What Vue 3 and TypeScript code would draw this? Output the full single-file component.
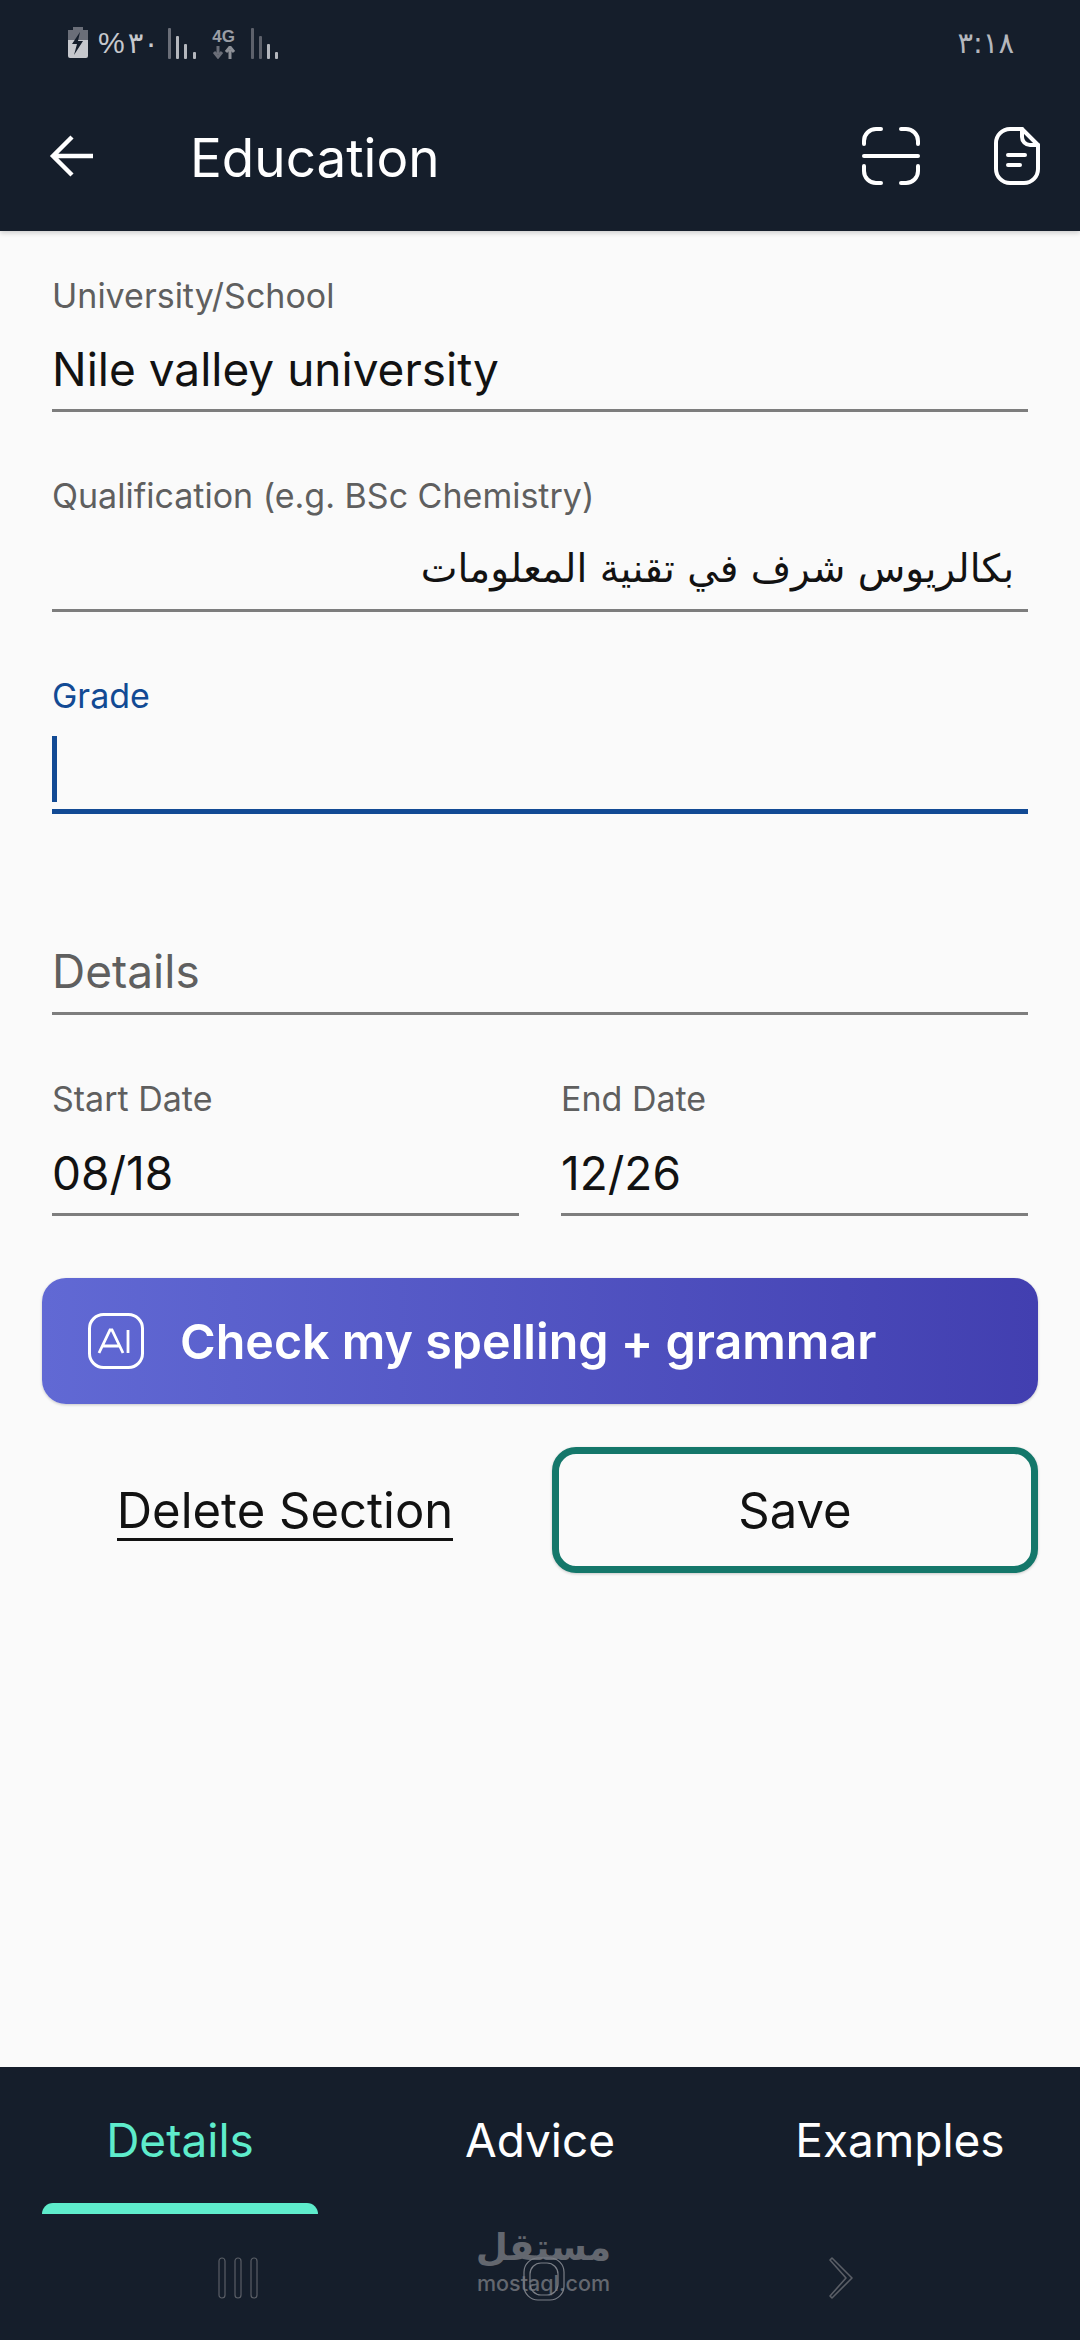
<script setup lang="ts">
interface Field { label: string; value: string; rtl?: boolean }
const topFields: Field[] = [
  { label: 'University/School', value: 'Nile valley university' },
  { label: 'Qualification (e.g. BSc Chemistry)', value: 'بكالريوس شرف في تقنية المعلومات', rtl: true },
]
const dates: Field[] = [
  { label: 'Start Date', value: '08/18' },
  { label: 'End Date', value: '12/26' },
]
const tabs = ['Details', 'Advice', 'Examples']
</script>

<template>
  <div class="screen">
    <header class="header">
      <div class="status">
        <div class="status-left">
          <svg class="battery" width="22" height="32" viewBox="0 0 22 32">
            <path d="M6 0h10v3h5v10H1V3h5z" fill="#6a6e78" />
            <path d="M1 13h20v16a2 2 0 0 1-2 2H3a2 2 0 0 1-2-2z" fill="#c6c8cd" />
            <path d="M13 5 5 17h5l-3 11 9-14h-5z" fill="#151e2b" />
          </svg>
          <span class="status-text pct">%</span>
          <span class="status-text num">۳۰</span>
          <svg class="sig1" width="28" height="31" viewBox="0 0 28 31">
            <rect x="0" y="0" width="3" height="31" rx="1" fill="#6a6e78" />
            <rect x="8" y="8" width="3" height="23" rx="1" fill="#b4b7bd" />
            <rect x="16" y="16" width="3" height="15" rx="1" fill="#b4b7bd" />
            <rect x="25" y="24" width="3" height="7" rx="1" fill="#b4b7bd" />
          </svg>
          <div class="net">
            <span class="net-label">4G</span>
            <svg width="24" height="13" viewBox="0 0 24 13">
              <path d="M6 0v8M2 6l4 5 4-5" stroke="#6a6e78" stroke-width="3" fill="none" />
              <path d="M18 13V4M14 6l4-5 4 5" stroke="#8d9097" stroke-width="3" fill="none" />
            </svg>
          </div>
          <svg class="sig2" width="27" height="31" viewBox="0 0 27 31">
            <rect x="0" y="0" width="3" height="31" rx="1" fill="#5d616b" />
            <rect x="8" y="8" width="3" height="23" rx="1" fill="#5d616b" />
            <rect x="16" y="16" width="3" height="15" rx="1" fill="#b4b7bd" />
            <rect x="24" y="24" width="3" height="7" rx="1" fill="#b4b7bd" />
          </svg>
        </div>
        <span class="time">۳:۱۸</span>
      </div>
      <div class="toolbar">
        <svg class="back" width="44" height="44" viewBox="0 0 44 44">
          <path d="M44 22H4M23 3 4 22l19 19" fill="none" stroke="#fff" stroke-width="4.4" />
        </svg>
        <h1 class="title">Education</h1>
        <svg class="scan" width="58" height="58" viewBox="0 0 58 58" fill="none" stroke="#fff" stroke-width="4" stroke-linecap="round">
          <path d="M19 2h-5A12 12 0 0 0 2 14v3" />
          <path d="M39 2h5a12 12 0 0 1 12 12v3" />
          <path d="M2 29h54" />
          <path d="M2 39v5a12 12 0 0 0 12 12h5" />
          <path d="M56 39v5a12 12 0 0 1-12 12h-5" />
        </svg>
        <svg class="doc" width="46" height="58" viewBox="0 0 46 58" fill="none" stroke="#fff" stroke-width="4" stroke-linecap="round" stroke-linejoin="round">
          <path d="M28 2H16A14 14 0 0 0 2 16v26a14 14 0 0 0 14 14h14a14 14 0 0 0 14-14V18z" />
          <path d="M28 2v8a8 8 0 0 0 8 8h8" />
          <path d="M14 28h17M14 38h12" />
        </svg>
      </div>
    </header>

    <main class="main">
      <div class="fields">
        <div v-for="f in topFields" :key="f.label" class="field">
          <label class="label">{{ f.label }}</label>
          <div class="value" :class="{ rtl: f.rtl }">{{ f.value }}</div>
        </div>
        <div class="field focused">
          <label class="label">Grade</label>
          <div class="value"><span class="caret"></span></div>
        </div>
        <div class="field plain">
          <div class="value placeholder">Details</div>
        </div>
        <div class="date-row">
          <div v-for="d in dates" :key="d.label" class="field">
            <label class="label">{{ d.label }}</label>
            <div class="value">{{ d.value }}</div>
          </div>
        </div>
      </div>

      <button class="ai-btn" type="button">
        <svg class="ai-icon" width="56" height="56" viewBox="0 0 56 56" fill="none">
          <rect x="1.5" y="1.5" width="53" height="53" rx="14" stroke="#fff" stroke-width="3" />
          <path d="M11 40 22 17h2l11 23M15 33h16M40 17v23" stroke="#fff" stroke-width="2.8" />
        </svg>
        <span>Check my spelling + grammar</span>
      </button>

      <div class="actions">
        <div class="delete-wrap"><span class="delete">Delete Section</span></div>
        <button class="save" type="button">Save</button>
      </div>
    </main>

    <footer class="footer">
      <nav class="tabs">
        <div v-for="(t, i) in tabs" :key="t" class="tab" :class="{ active: i === 0 }">
          <span class="tab-text">{{ t }}</span>
          <span class="indicator"></span>
        </div>
      </nav>
      <div class="sysnav">
        <svg width="40" height="42" viewBox="0 0 40 42" fill="none" stroke="#5a5e66" stroke-width="1.2">
          <rect x="1" y="1" width="6" height="40" rx="3" />
          <rect x="17" y="1" width="6" height="40" rx="3" />
          <rect x="33" y="1" width="6" height="40" rx="3" />
        </svg>
        <div class="home">
          <div class="watermark">
            <span class="wm-ar">مستقل</span>
            <span class="wm-en">mostaql.com</span>
          </div>
          <svg class="home-icon" width="42" height="44" viewBox="0 0 42 44" fill="none" stroke="#7b7f87" stroke-width="1.2">
            <rect x="1" y="1" width="40" height="42" rx="14" />
            <rect x="7" y="6" width="28" height="32" rx="11" />
          </svg>
        </div>
        <svg width="24" height="42" viewBox="0 0 24 42" fill="none" stroke="#5a5e66" stroke-width="1.6" stroke-linejoin="round">
          <path d="M1 3 3 1 23 21 3 41 1 39 17 21z" />
        </svg>
      </div>
    </footer>
  </div>
</template>

<style>
html, body { margin: 0; background: #fafafa; }
</style>

<style scoped>
.screen {
  width: 1080px;
  height: 2340px;
  display: flex;
  flex-direction: column;
  background: #fafafa;
  font-family: Inter, "Noto Sans", sans-serif;
  overflow: hidden;
}
.header {
  height: 231px;
  flex: none;
  background: #151e2b;
  box-shadow: 0 2px 5px rgba(0, 0, 0, 0.18);
  position: relative;
  z-index: 1;
}
.status {
  height: 86px;
  padding: 0 66px 0 67px;
  display: flex;
  align-items: center;
  justify-content: space-between;
}
.status-left { display: flex; align-items: center; }
.status-text { color: #c6c8cd; font-family: "Liberation Sans", sans-serif; }
.pct { font-size: 30px; margin-left: 9px; }
.num { font-family: "DejaVu Sans", sans-serif; font-size: 29px; margin-left: 3px; width: 27px; }
.sig1 { margin-left: 13px; }
.net { display: flex; flex-direction: column; align-items: center; margin-left: 16px; width: 24px; }
.net-label { color: #9b9ea5; font: 700 17px/18px "Liberation Sans", sans-serif; }
.sig2 { margin-left: 15px; }
.time { color: #b4b7bd; font-family: "DejaVu Sans", sans-serif; font-size: 29px; }
.toolbar {
  height: 140px;
  padding: 0 40px 0 49px;
  display: flex;
  align-items: center;
}
.back { flex: none; }
.title {
  margin: 3px 0 0 97px;
  flex: 1;
  color: #fff;
  font-size: 53px;
  font-weight: 400;
}
.scan { margin-right: 74px; }
.main {
  flex: 1;
  padding: 45px 42px 0;
  display: flex;
  flex-direction: column;
}
.fields {
  padding: 0 10px;
  display: flex;
  flex-direction: column;
  gap: 64px;
}
.field { border-bottom: 3px solid #7d7d7d; padding-bottom: 10px; }
.label { display: block; height: 40px; color: #5f5f5f; font-size: 34px; line-height: 40px; }
.value {
  margin-top: 23px;
  height: 60px;
  color: #121212;
  font-size: 46px;
  line-height: 60px;
  position: relative;
}
.rtl {
  direction: rtl;
  padding-right: 14px;
  font-family: "DejaVu Sans", sans-serif;
  font-size: 39px;
}
.focused { border-bottom: 5px solid #124a94; }
.focused .label { color: #124a94; }
.caret {
  position: absolute;
  left: 0;
  top: -3px;
  width: 5px;
  height: 66px;
  background: #124a94;
}
.plain .value { margin-top: 63px; }
.plain { padding-bottom: 11px; }
.placeholder { color: #5f5f5f; }
.date-row {
  display: grid;
  grid-template-columns: 1fr 1fr;
  gap: 42px;
}
.date-row .value { margin-top: 24px; }
.ai-btn {
  margin-top: 62px;
  height: 126px;
  border: 0;
  border-radius: 24px;
  padding: 0 0 0 46px;
  display: flex;
  align-items: center;
  gap: 36px;
  background: linear-gradient(90deg, #6169d4, #423fb0);
  color: #fff;
  font: 600 48.4px Inter, sans-serif;
  box-shadow: 0 1px 3px rgba(0, 0, 0, 0.2);
}
.ai-icon { flex: none; }
.actions {
  margin-top: 43px;
  display: grid;
  grid-template-columns: 1fr 1fr;
  gap: 24px;
}
.delete-wrap { display: flex; align-items: center; justify-content: center; }
.delete {
  margin-top: 4px;
  color: #121212;
  font-size: 49px;
  line-height: 54px;
  border-bottom: 3px solid #121212;
}
.save {
  height: 126px;
  background: #fafafa;
  border: 7px solid #14776a;
  border-radius: 24px;
  color: #121212;
  font: 400 49px Inter, sans-serif;
  box-shadow: 0 1px 3px rgba(0, 0, 0, 0.2);
}
.footer { flex: none; background: #151e2b; height: 273px; }
.tabs { display: grid; grid-template-columns: repeat(3, 1fr); height: 147px; }
.tab { display: flex; flex-direction: column; align-items: stretch; }
.tab-text {
  height: 136px;
  padding-top: 43px;
  box-sizing: border-box;
  line-height: 60px;
  text-align: center;
  color: #fff;
  font-size: 46px;
}
.indicator { height: 11px; margin: 0 42px; border-radius: 12px 12px 0 0; }
.active .tab-text { color: #5eeccb; }
.active .indicator { background: #5eeccb; }
.sysnav {
  height: 126px;
  padding: 43px 227px 0 218px;
  box-sizing: border-box;
  display: flex;
  align-items: flex-start;
  justify-content: space-between;
}
.home { position: relative; width: 42px; height: 44px; }
.home-icon { position: relative; }
.watermark {
  position: absolute;
  left: 50%;
  top: -27px;
  transform: translateX(-50%);
  display: flex;
  flex-direction: column;
  align-items: center;
  color: #63676f;
  white-space: nowrap;
}
.wm-ar { font: 700 37px/36px "DejaVu Sans", sans-serif; }
.wm-en { font: 500 21.5px/22px Inter, sans-serif; margin-top: 6px; }
</style>
